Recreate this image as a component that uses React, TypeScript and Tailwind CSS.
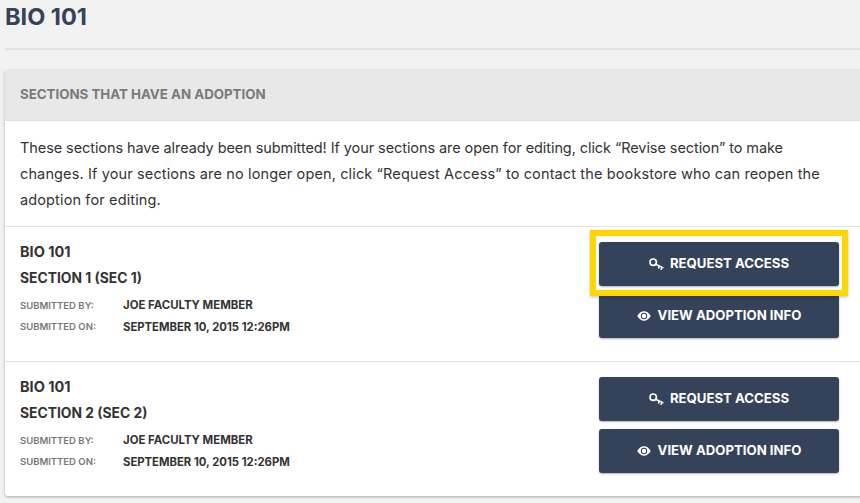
import React from "react";

const font = { fontFamily: '"Inter", "Liberation Sans", sans-serif' };

function KeyIcon() {
  return (
    <svg width="15" height="13" viewBox="0 0 15 13" fill="none" stroke="#fff" strokeWidth="1.6" className="shrink-0">
      <circle cx="4.2" cy="4.2" r="3.2" />
      <path d="M6.6 6.2 L13.8 9.6 M10.4 8 L9.6 9.9 M13 9.3 L12.2 11.2" strokeLinecap="round" />
    </svg>
  );
}

function EyeIcon() {
  return (
    <svg width="14" height="10" viewBox="0 0 14 10" className="shrink-0">
      <path d="M0.3 5 C2.2 1.6 4.6 0.3 7 0.3 C9.4 0.3 11.8 1.6 13.7 5 C11.8 8.4 9.4 9.7 7 9.7 C4.6 9.7 2.2 8.4 0.3 5 Z" fill="#fff" />
      <circle cx="7" cy="5" r="3.2" fill="#35435a" />
      <circle cx="7" cy="5" r="2.2" fill="#fff" />
    </svg>
  );
}

function ActionButton({ icon, label, gap }: { icon: React.ReactNode; label: string; gap: string }) {
  return (
    <button className={`flex h-[44px] w-[240px] items-center justify-center ${gap} rounded-[3px] bg-[#35435a] text-[13.2px] font-bold text-white shadow-[0_1px_2px_rgba(0,0,0,0.3)]`}>
      {icon}
      <span>{label}</span>
    </button>
  );
}

function Section({ name, highlight }: { name: string; highlight?: boolean }) {
  return (
    <div className="relative flex justify-between border-t border-[#e2e2e2] pl-[15px] pr-[26px] pt-[15px] h-[135px]">
      <div className="text-[#333333]">
        <div className="text-[14.5px] font-bold leading-[20px]">BIO 101</div>
        <div className="mt-[6px] text-[13.85px] font-bold leading-[20px]">{name}</div>
        <div className="mt-[7px] flex h-[22px] items-center">
          <span className="w-[103px] text-[9.5px] font-semibold text-[#777777]">SUBMITTED BY:</span>
          <span className="text-[11.4px] font-bold">JOE FACULTY MEMBER</span>
        </div>
        <div className="flex h-[21px] items-center">
          <span className="w-[103px] text-[9.5px] font-semibold text-[#777777]">SUBMITTED ON:</span>
          <span className="text-[11.3px] font-bold">SEPTEMBER 10, 2015 12:26PM</span>
        </div>
      </div>
      <div className="flex flex-col gap-[8px]">
        <ActionButton icon={<KeyIcon />} label="REQUEST ACCESS" gap="gap-[6px]" />
        <ActionButton icon={<EyeIcon />} label="VIEW ADOPTION INFO" gap="gap-[7px]" />
      </div>
      {highlight && (
        <div className="absolute left-[585px] top-[3px] h-[66px] w-[258px] border-[6px] border-[#ffd700] shadow-[0_1px_3px_rgba(0,0,0,0.25)]" />
      )}
    </div>
  );
}

export default function App() {
  return (
    <div style={font} className="h-[503px] w-[860px] overflow-hidden bg-[#f2f2f2] pl-[5px]">
      <div className="h-[50px] border-b-2 border-[#e3e3e3]">
        <h1 className="pt-[1px] text-[23.5px] font-bold leading-[32px] text-[#34435a]">BIO 101</h1>
      </div>
      <div className="mt-[20px] w-[860px] rounded-[3px] bg-white shadow-[0_1px_3px_rgba(0,0,0,0.3)]">
        <div className="flex h-[51px] items-center border-b border-[#e0e0e0] bg-[#e8e8e8] pl-[15px] text-[13.3px] font-bold text-[#7a7a7a]">
          SECTIONS THAT HAVE AN ADOPTION
        </div>
        <p className="h-[105px] pl-[15px] pt-[14px] text-[14.5px] leading-[26px] whitespace-nowrap text-[#333333]">
          <span className="block tracking-[-0.08px]">These sections have already been submitted! If your sections are open for editing, click “Revise section” to make</span>
          <span className="block tracking-[0.13px]">changes. If your sections are no longer open, click “Request Access” to contact the bookstore who can reopen the</span>
          <span className="block tracking-[0.13px]">adoption for editing.</span>
        </p>
        <Section name="SECTION 1 (SEC 1)" highlight />
        <Section name="SECTION 2 (SEC 2)" />
      </div>
    </div>
  );
}
